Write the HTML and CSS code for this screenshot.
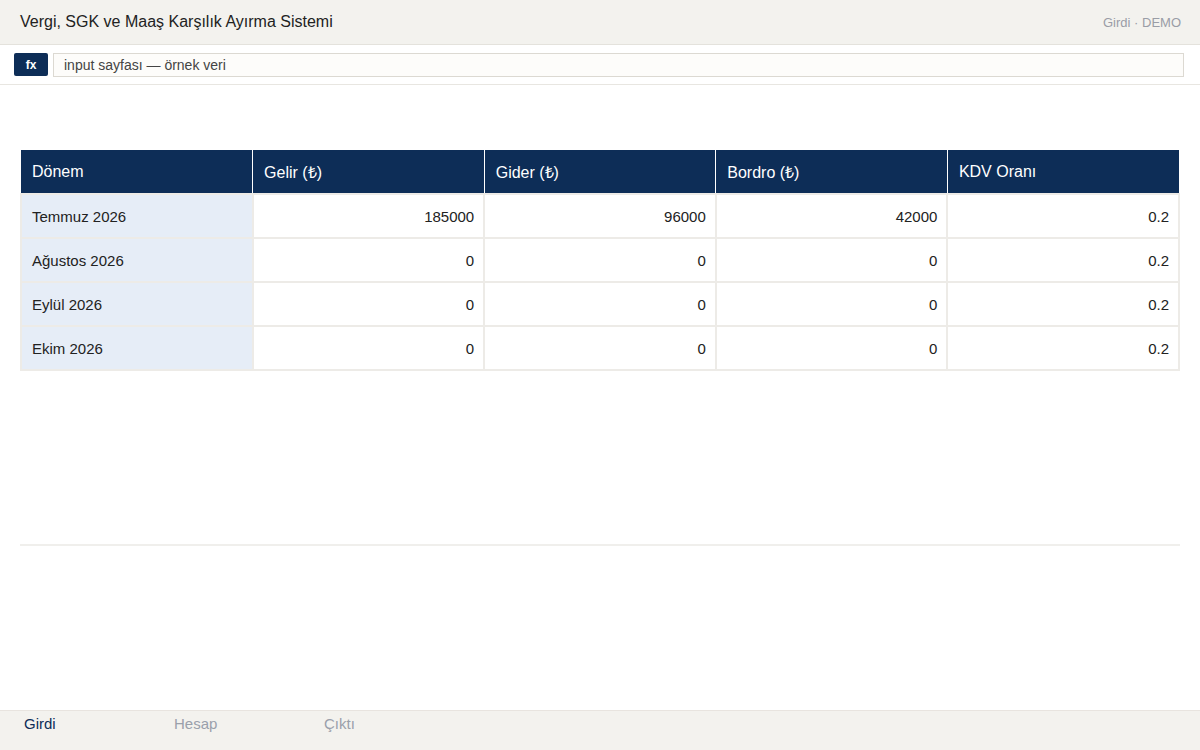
FILE: index.html
```html
<!DOCTYPE html>
<html lang="tr">
<head>
  <meta charset="UTF-8">
  <title>Vergi, SGK ve Maaş Karşılık Ayırma Sistemi</title>
  <link rel="stylesheet" href="styles.css">
</head>
<body>

  <!-- üst bar -->
  <header class="top-bar">
    <div class="app-title">Vergi, SGK ve Maaş Karşılık Ayırma Sistemi</div>
    <div class="app-meta">Girdi · DEMO</div>
  </header>

  <!-- formül satırı -->
  <div class="formula-bar">
    <span class="fx-button">fx</span>
    <div class="formula-input">input sayfası — örnek veri</div>
  </div>

  <main class="sheet">
    <table class="data-table">
      <thead>
        <tr>
          <th>Dönem</th>
          <th>Gelir (₺)</th>
          <th>Gider (₺)</th>
          <th>Bordro (₺)</th>
          <th>KDV Oranı</th>
        </tr>
      </thead>
      <tbody>
        <tr>
          <td class="period">Temmuz 2026</td>
          <td>185000</td>
          <td>96000</td>
          <td>42000</td>
          <td>0.2</td>
        </tr>
        <tr>
          <td class="period">Ağustos 2026</td>
          <td>0</td>
          <td>0</td>
          <td>0</td>
          <td>0.2</td>
        </tr>
        <tr>
          <td class="period">Eylül 2026</td>
          <td>0</td>
          <td>0</td>
          <td>0</td>
          <td>0.2</td>
        </tr>
        <tr>
          <td class="period">Ekim 2026</td>
          <td>0</td>
          <td>0</td>
          <td>0</td>
          <td>0.2</td>
        </tr>
      </tbody>
    </table>

    <div class="divider"></div>
  </main>

  <!-- sayfa sekmeleri -->
  <nav class="sheet-tabs">
    <span class="tab active">Girdi</span>
    <span class="tab">Hesap</span>
    <span class="tab">Çıktı</span>
  </nav>

</body>
</html>
```

FILE: styles.css
```css
* {
  box-sizing: border-box;
}

html, body {
  height: 100%;
}

body {
  margin: 0;
  font-family: "Liberation Sans", Arial, sans-serif;
  background: #fff;
  color: #222;
  display: flex;
  flex-direction: column;
}

.top-bar {
  height: 45px;
  background: #f3f2ee;
  border-bottom: 1px solid #e4e2dc;
  display: flex;
  align-items: center;
  justify-content: space-between;
  padding: 0 19px 0 20px;
}

.app-title {
  font-size: 16px;
  color: #222;
}

.app-meta {
  font-size: 13px;
  color: #9a9da6;
}

.formula-bar {
  height: 40px;
  display: flex;
  align-items: center;
  gap: 5px;
  padding: 0 16px 0 14px;
  border-bottom: 1px solid #e8e6e1;
}

.fx-button {
  width: 34px;
  height: 23px;
  background: #0d2d57;
  color: #fff;
  font-size: 12px;
  font-weight: bold;
  border-radius: 2px;
  display: flex;
  align-items: center;
  justify-content: center;
}

.formula-input {
  flex: 1;
  height: 24px;
  border: 1px solid #dcd9d2;
  background: #fdfcfa;
  font-size: 14px;
  color: #444;
  padding: 0 10px;
  display: flex;
  align-items: center;
}

.sheet {
  flex: 1;
  padding: 65px 20px 0;
}

.data-table {
  width: 100%;
  border-collapse: collapse;
  table-layout: fixed;
  font-size: 15px;
}

.data-table th {
  height: 44px;
  background: #0d2d57;
  color: #fff;
  font-weight: normal;
  font-size: 16px;
  text-align: left;
  padding: 0 12px 0 11px;
  border-right: 1px solid #fff;
  border-bottom: 1px solid #8a9bb3;
}

.data-table th:last-child {
  border-right: none;
}

.data-table td {
  height: 44px;
  text-align: right;
  padding: 0 9px;
  border: 2px solid #edebe7;
  color: #222;
}

.data-table td.period {
  text-align: left;
  background: #e6edf7;
  padding: 0 10px;
}

.divider {
  height: 2px;
  background: #f0efec;
  margin-top: 173px;
}

.sheet-tabs {
  height: 40px;
  background: #f3f2ee;
  border-top: 1px solid #e8e4df;
  display: flex;
  padding: 4px 0 0 24px;
}

.tab {
  width: 150px;
  font-size: 15px;
  color: #9aa0ab;
}

.tab.active {
  color: #0d2d57;
}
```
